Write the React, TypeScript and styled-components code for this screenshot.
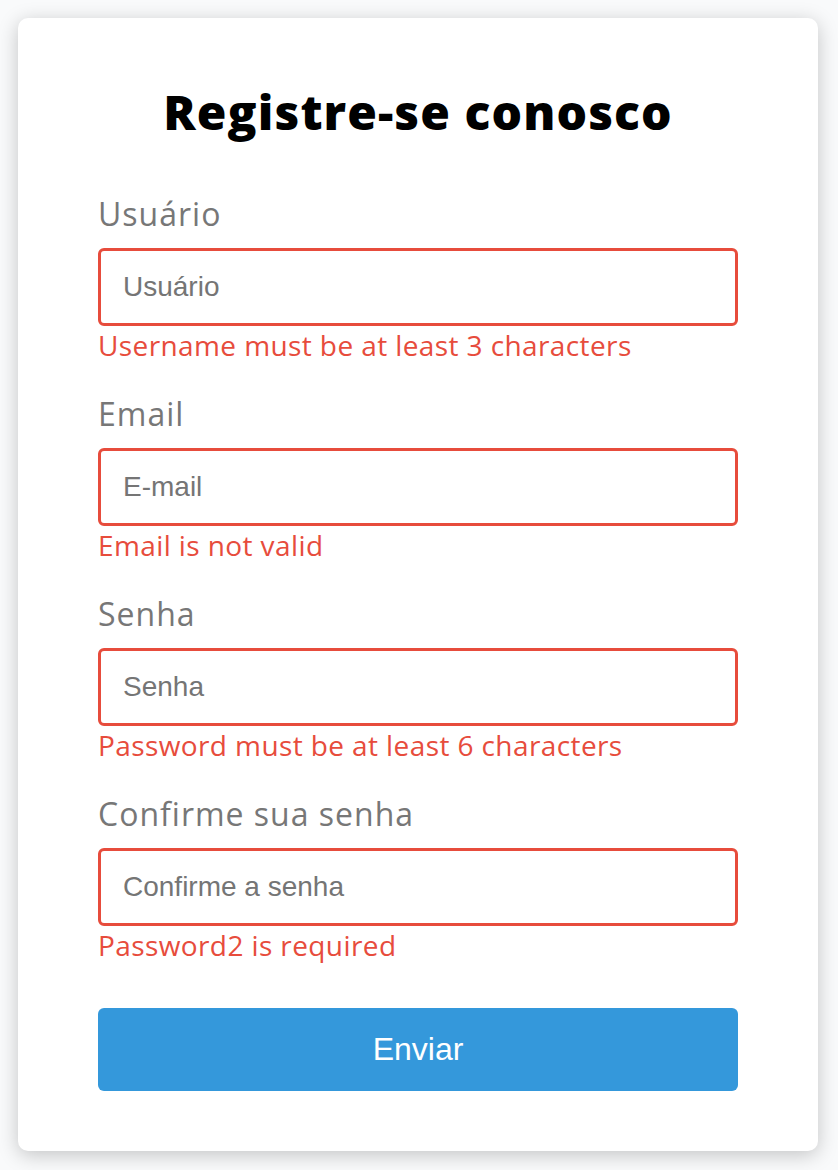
import React from "react";
import styled, { createGlobalStyle } from "styled-components";

const GlobalStyle = createGlobalStyle`
  * { box-sizing: border-box; }
  html, body { margin: 0; padding: 0; }
  body {
    background-color: #f9fafb;
    font-family: "Open Sans", "Liberation Sans", sans-serif;
  }
`;

const Page = styled.div`
  display: flex;
  justify-content: flex-start;
  align-items: flex-start;
  padding: 18px 0 0 18px;
  min-height: 1170px;
`;

const Card = styled.div`
  width: 800px;
  background: #fff;
  border-radius: 10px;
  box-shadow: 0 4px 20px rgba(0, 0, 0, 0.22);
  padding: 58px 80px 60px;
`;

const Title = styled.h2`
  margin: 0 0 42px;
  text-align: center;
  font-size: 48px;
  line-height: 72px;
  font-weight: 800;
  letter-spacing: 1.1px;
  color: #000;
`;

const Form = styled.form`
  display: flex;
  flex-direction: column;
`;

const Field = styled.div`
  display: flex;
  flex-direction: column;
  height: 200px;
`;

const Label = styled.label`
  display: block;
  color: #777;
  font-size: 32px;
  line-height: 48px;
  letter-spacing: 1px;
  margin-bottom: 10px;
`;

const Input = styled.input`
  display: block;
  width: 100%;
  height: 78px;
  padding: 0 22px;
  border: 3px solid #e74c3c;
  border-radius: 6px;
  font-family: "Liberation Sans", Arial, sans-serif;
  font-size: 28px;
  color: #333;
  outline: none;
  &::placeholder { color: #757575; }
`;

const ErrorText = styled.small`
  display: block;
  color: #e74c3c;
  font-size: 28px;
  line-height: 42px;
  letter-spacing: 0.4px;
  margin-top: -2px;
`;

const Button = styled.button`
  display: block;
  width: 100%;
  height: 83px;
  margin-top: 18px;
  background-color: #3498db;
  border: none;
  border-radius: 6px;
  color: #fff;
  font-family: "Liberation Sans", Arial, sans-serif;
  font-size: 32px;
  cursor: pointer;
`;

const fields = [
  { label: "Usuário", placeholder: "Usuário", type: "text", error: "Username must be at least 3 characters" },
  { label: "Email", placeholder: "E-mail", type: "text", error: "Email is not valid" },
  { label: "Senha", placeholder: "Senha", type: "password", error: "Password must be at least 6 characters" },
  { label: "Confirme sua senha", placeholder: "Confirme a senha", type: "password", error: "Password2 is required" },
];

export default function App() {
  return (
    <>
      <GlobalStyle />
      <Page>
        <Card>
          <Title>Registre-se conosco</Title>
          <Form onSubmit={(e) => e.preventDefault()}>
            {fields.map((f) => (
              <Field key={f.label}>
                <Label>{f.label}</Label>
                <Input type={f.type} placeholder={f.placeholder} />
                <ErrorText>{f.error}</ErrorText>
              </Field>
            ))}
            <Button type="submit">Enviar</Button>
          </Form>
        </Card>
      </Page>
    </>
  );
}
